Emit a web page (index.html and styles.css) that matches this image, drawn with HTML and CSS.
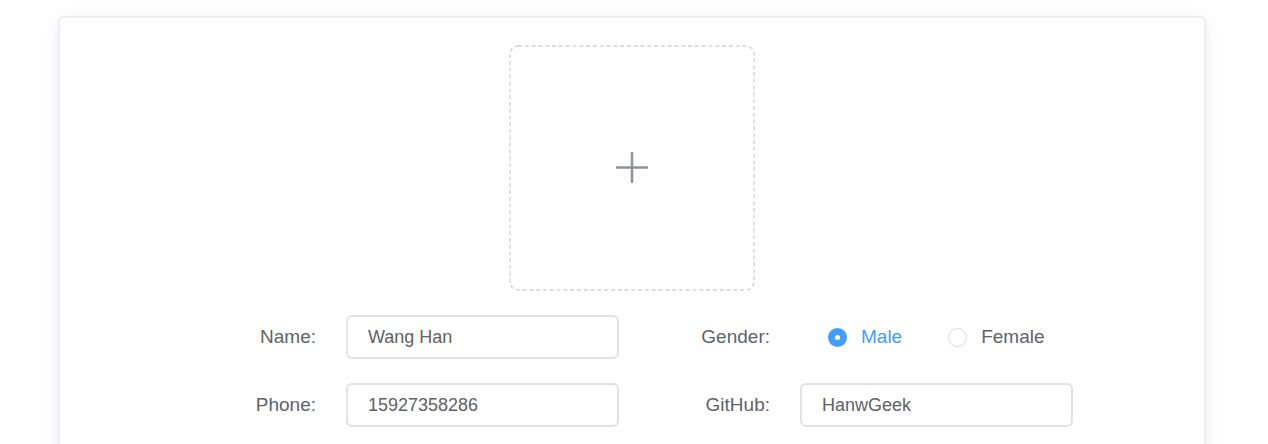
FILE: index.html
```html
<!DOCTYPE html>
<html lang="en">
<head>
<meta charset="utf-8">
<meta name="viewport" content="width=device-width, initial-scale=1">
<title>Profile</title>
<link rel="stylesheet" href="styles.css">
</head>
<body>
<main class="card">
  <button class="upload" type="button" aria-label="Upload picture">
    <svg class="art" viewBox="0 0 246 246" aria-hidden="true">
      <rect class="frame" x="1" y="1" width="244" height="244" rx="8" />
      <path class="plus" d="M107 122.500H139M123 107V138" />
    </svg>
  </button>
  <form class="form">
    <label class="label" for="name">Name:</label>
    <input class="input" id="name" type="text" value="Wang Han">
    <span class="label" id="gender">Gender:</span>
    <div class="radios" role="radiogroup" aria-labelledby="gender">
      <label class="option"><input class="radio" type="radio" name="gender" checked><span class="text">Male</span></label>
      <label class="option"><input class="radio" type="radio" name="gender"><span class="text">Female</span></label>
    </div>
    <label class="label" for="phone">Phone:</label>
    <input class="input" id="phone" type="text" value="15927358286">
    <label class="label" for="github">GitHub:</label>
    <input class="input" id="github" type="text" value="HanwGeek">
  </form>
</main>
</body>
</html>
```
FILE: styles.css
```css
* { box-sizing: border-box; }
body {
  margin: 0;
  height: 100vh;
  overflow: hidden;
  padding: 16px 62px 0 58px;
  background: #fff;
  color: #606266;
  font-family: "Liberation Sans", Arial, sans-serif;
  font-size: 19px;
}
.card {
  padding: 27px 0 32px;
  border: 2px solid #ebeef5;
  border-radius: 6px;
  box-shadow: 0 3px 16px rgba(0, 0, 0, 0.08);
  background: #fff;
}
.upload {
  display: block;
  width: 246px;
  height: 246px;
  margin: 0 auto 24px;
  padding: 0;
  border: 0;
  background: none;
  cursor: pointer;
}
.art {
  display: block;
  width: 100%;
  height: 100%;
  fill: none;
}
.frame {
  stroke: #d4d4d4;
  stroke-width: 1.4;
  stroke-dasharray: 4.1 2.7;
}
.plus {
  stroke: #8c939d;
  stroke-width: 2.5;
}
.form {
  display: grid;
  grid-template-columns: 181fr 273fr 181fr 273fr;
  row-gap: 24px;
  align-items: center;
  padding: 0 131px 0 105px;
}
.label {
  padding-right: 30px;
  text-align: right;
}
.input {
  width: 100%;
  min-width: 0;
  height: 44px;
  padding: 0 20px;
  border: 2px solid #e0e2e9;
  border-radius: 6px;
  background: #fff;
  color: inherit;
  font: inherit;
  font-size: 18px;
}
.radios {
  display: flex;
  gap: 46px;
  padding-left: 28px;
}
.option {
  display: flex;
  align-items: center;
  gap: 14px;
}
.radio {
  appearance: none;
  width: 19px;
  height: 19px;
  margin: 0;
  border: 1px solid #d6d9e1;
  border-radius: 50%;
  background: #fff;
}
.radio:checked {
  border: 7px solid #409eff;
}
.radio:checked + .text { color: #409eff; }
```
